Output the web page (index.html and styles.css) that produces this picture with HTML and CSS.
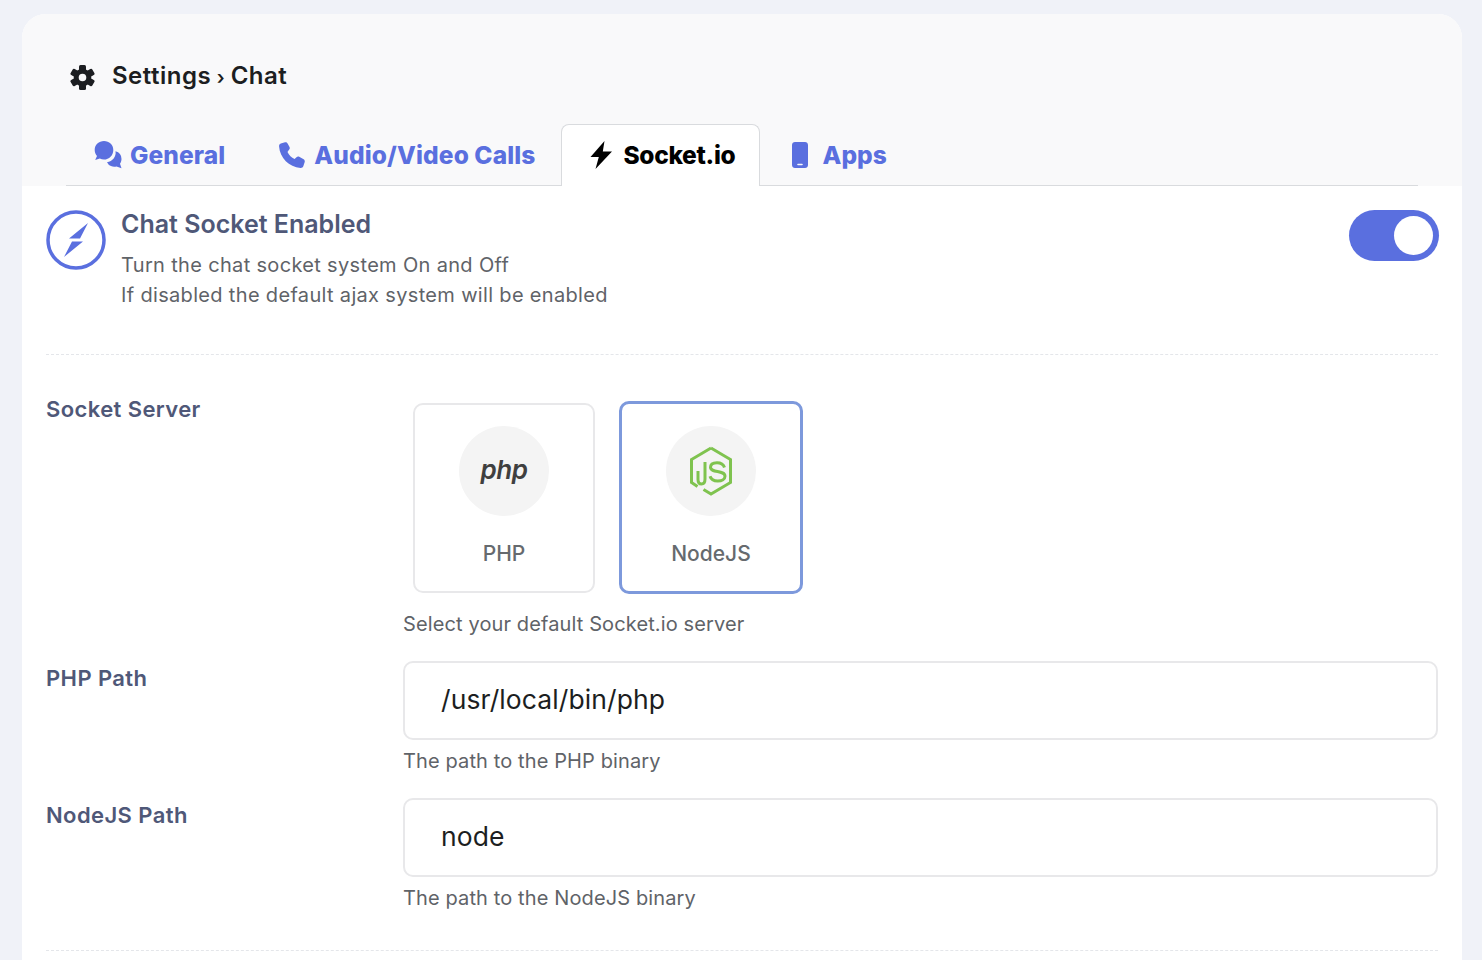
FILE: index.html
```html
<!DOCTYPE html>
<html lang="en">
<head>
    <meta charset="UTF-8">
    <meta name="viewport" content="width=device-width, initial-scale=1.0">
    <title>Settings - Chat</title>
    <link rel="stylesheet" href="styles.css">
</head>
<body>
    <div class="card">
        <div class="card-top">
            <h1 class="page-title">
                <svg class="gear" viewBox="-12.500 -12.500 25 25">
                    <circle r="6.300" fill="none" stroke="#1c1e21" stroke-width="5"/>
                    <rect x="-3.500" y="-12.500" width="7" height="6" rx="1.500"/>
                    <rect x="-3.500" y="-12.500" width="7" height="6" rx="1.500" transform="rotate(60)"/>
                    <rect x="-3.500" y="-12.500" width="7" height="6" rx="1.500" transform="rotate(120)"/>
                    <rect x="-3.500" y="-12.500" width="7" height="6" rx="1.500" transform="rotate(180)"/>
                    <rect x="-3.500" y="-12.500" width="7" height="6" rx="1.500" transform="rotate(240)"/>
                    <rect x="-3.500" y="-12.500" width="7" height="6" rx="1.500" transform="rotate(300)"/>
                </svg>
                <span>Settings <span class="crumb-sep">›</span> Chat</span>
            </h1>
            <div class="tabs">
                <a class="tab tab-first">
                    <svg class="tab-icon" viewBox="0 0 28 28">
                        <path d="M10 0C4.900 0 .7 3.800.7 8.900c0 2.300.9 4.400 2.300 6L1.200 19l4.600-1.400c1.300.6 2.700.9 4.200.9 5.100 0 9.300-4.100 9.300-9.600C19.300 3.800 15.100 0 10 0z"/>
                        <path d="M21.500 10.300A8 8 0 0 1 27.500 18c0 1.800-.6 3.500-1.500 4.800l1.500 4.500-5-1.800a8 8 0 0 1-9.500-4.300c5.500-.7 9.500-5.700 8.500-10.900z"/>
                    </svg>
                    General
                </a>
                <a class="tab">
                    <svg class="tab-icon" viewBox="0 0 26 26"><path d="M6.500 1.200 2.600 2.400C1.500 2.800.9 3.900 1 5c.8 10.600 9.200 19.100 19.900 20 1.200.1 2.200-.5 2.600-1.600l1.300-4c.3-1-.1-2-1-2.500l-4.100-2.200c-.8-.4-1.800-.3-2.500.3l-1.800 1.800c-2.900-1.500-5.100-3.800-6.600-6.700L10.400 8c.6-.7.7-1.700.3-2.500L8.900 2.300c-.5-.9-1.400-1.300-2.400-1.100z"/></svg>
                    Audio/Video Calls
                </a>
                <a class="tab tab-active">
                    <svg class="tab-icon" viewBox="0 0 24 28"><path d="M15.500 0 1.500 16h8.300L6.500 28 23 10.500h-9.200z"/></svg>
                    Socket.io
                </a>
                <a class="tab">
                    <svg class="tab-icon" viewBox="0 0 24 28"><path fill-rule="evenodd" d="M7 1h10c1.700 0 3 1.300 3 3v20c0 1.700-1.300 3-3 3H7c-1.700 0-3-1.300-3-3V4c0-1.700 1.300-3 3-3zm3 21.700a.8.800 0 0 0 0 1.600h4a.8.800 0 0 0 0-1.600z"/></svg>
                    Apps
                </a>
            </div>
        </div>

        <div class="card-body">
            <div class="switch-row">
                <svg class="bolt-circle" viewBox="0 0 60 60">
                    <circle cx="30" cy="30" r="28" fill="none" stroke="#5a6fdf" stroke-width="3.500"/>
                    <path d="M42 13 23 28.500H34zM37 31.500H26L18 47z" fill="#5a6fdf"/>
                </svg>
                <div class="switch-text">
                    <h2 class="switch-title">Chat Socket Enabled</h2>
                    <p class="switch-desc">Turn the chat socket system On and Off<br>If disabled the default ajax system will be enabled</p>
                </div>
                <div class="toggle"><span class="knob"></span></div>
            </div>

            <div class="form-rows">
                <div class="form-row">
                    <label class="form-label form-label-top">Socket Server</label>
                    <div>
                        <div class="servers">
                            <div class="server">
                                <div class="server-logo"><span class="php-logo">php</span></div>
                                <span class="server-name">PHP</span>
                            </div>
                            <div class="server server-active">
                                <div class="server-logo">
                                    <svg class="node-logo" viewBox="0 0 46 50" fill="none" stroke="#7fc34f" stroke-width="3">
                                        <path d="M23 2 42.500 13.500V36.500L23 48 15.500 43.500"/>
                                        <path d="M9.500 40.500 3.500 36.500V13.500L23 2"/>
                                        <path d="M17 16V33c0 3.200-1.500 5-3.500 5S10 36.500 10 33.500V25"/>
                                        <path d="M36.500 21.500c-1-3-3.500-4.800-7.500-4.800-4 0-6.500 1.800-6.500 4.600 0 6 14.500 2.500 14.500 9 0 2.800-3 4.700-7.200 4.700-4 0-6.800-1.500-7.800-4.700"/>
                                    </svg>
                                </div>
                                <span class="server-name">NodeJS</span>
                            </div>
                        </div>
                        <p class="help servers-help">Select your default Socket.io server</p>
                    </div>
                </div>

                <div class="form-row">
                    <label class="form-label">PHP Path</label>
                    <div>
                        <input class="text-input" type="text" value="/usr/local/bin/php">
                        <p class="help">The path to the PHP binary</p>
                    </div>
                </div>

                <div class="form-row">
                    <label class="form-label">NodeJS Path</label>
                    <div>
                        <input class="text-input" type="text" value="node">
                        <p class="help">The path to the NodeJS binary</p>
                    </div>
                </div>
            </div>
        </div>
    </div>
</body>
</html>
```

FILE: styles.css
```css
*{
    padding: 0;
    margin: 0;
    box-sizing: border-box;
}
html, body{
    height: 960px;
    overflow: hidden;
}
body{
    background-color: #f0f2f8;
    font-family: "Inter", "Noto Sans", Arial, sans-serif;
    padding: 14px 20px 0 22px;
}

.card{
    background: white;
    border-radius: 24px 24px 0 0;
    height: 946px;
}

.card-top{
    background: #f9f9fa;
    border-radius: 24px 24px 0 0;
    height: 172px;
    display: flex;
    flex-direction: column;
    justify-content: space-between;
    padding: 0 44px;
}

.page-title{
    display: flex;
    align-items: center;
    gap: 17px;
    font-size: 24px;
    font-weight: 600;
    color: #1c1e21;
    letter-spacing: 0.5px;
    word-spacing: -1px;
    padding: 49px 0 0 4px;
    line-height: 26px;
}

.crumb-sep{
    font-size: 19px;
}

.gear{
    width: 25px;
    height: 25px;
    fill: #1c1e21;
}

.tabs{
    display: flex;
    height: 62px;
    border-bottom: 1px solid #d9dbde;
    padding-left: 2px;
}

.tab{
    display: flex;
    align-items: center;
    gap: 8px;
    padding: 0 25px 2px;
    font-size: 24.5px;
    font-weight: 800;
    letter-spacing: 0.1px;
    color: #5a6fdf;
    margin-bottom: -1px;
    border: 1px solid transparent;
    border-bottom: none;
    white-space: nowrap;
}

.tab-first{
    padding-right: 26px;
}

.tab-icon{
    width: 28px;
    height: 28px;
    fill: #5a6fdf;
}

.tab-active{
    background: white;
    color: #000;
    border-color: #d9dbde;
    border-radius: 8px 8px 0 0;
    letter-spacing: -0.3px;
    padding-right: 24px;
}

.tab-active .tab-icon{
    fill: #000;
}

.card-body{
    padding: 24px 24px 0;
}

.switch-row{
    display: flex;
    align-items: flex-start;
    gap: 15px;
    height: 145px;
    border-bottom: 1px dashed #e4e6ea;
}

.bolt-circle{
    width: 60px;
    height: 60px;
    flex-shrink: 0;
}

.switch-text{
    flex: 1;
}

.switch-title{
    font-size: 25px;
    font-weight: 600;
    color: #4f5878;
    line-height: 28px;
}

.switch-desc{
    font-size: 20px;
    color: #5f6368;
    line-height: 30px;
    margin-top: 12px;
    letter-spacing: 0.33px;
}

.toggle{
    width: 90px;
    height: 51px;
    background: #5a6fdf;
    border-radius: 26px;
    display: flex;
    align-items: center;
    justify-content: flex-end;
    padding-right: 6px;
    margin-right: -1px;
}

.knob{
    width: 39px;
    height: 39px;
    border-radius: 50%;
    background: white;
}

.form-rows{
    display: flex;
    flex-direction: column;
    gap: 24px;
    padding: 46px 0 39px;
    border-bottom: 1px dashed #e4e6ea;
}

.form-row{
    display: grid;
    grid-template-columns: 357px 1fr;
}

.form-label{
    font-size: 22px;
    font-weight: 600;
    color: #4f5878;
    line-height: 26px;
    letter-spacing: 0.4px;
    padding-top: 4px;
}

.form-label-top{
    padding-top: 0;
    margin-top: -5px;
}

.servers{
    display: flex;
    align-items: center;
    gap: 24px;
    padding-left: 10px;
}

.server{
    width: 182px;
    height: 190px;
    background: white;
    border: 2px solid #e8e8ea;
    border-radius: 10px;
    display: flex;
    flex-direction: column;
    align-items: center;
    padding-top: 21px;
}

.server-active{
    width: 184px;
    height: 193px;
    border: 3px solid #7d99dc;
    padding-top: 22px;
}

.server-logo{
    width: 90px;
    height: 90px;
    border-radius: 50%;
    background: #f4f4f4;
    display: flex;
    align-items: center;
    justify-content: center;
}

.php-logo{
    font-size: 26px;
    font-weight: 600;
    font-style: italic;
    color: #3f3f3f;
    letter-spacing: -0.5px;
    margin-bottom: 3px;
}

.node-logo{
    width: 46px;
    height: 50px;
}

.server-name{
    font-size: 21px;
    font-weight: 500;
    color: #666a6e;
    margin-top: 25px;
}

.help{
    font-size: 20px;
    color: #5f6368;
    line-height: 26px;
    margin-top: 8px;
    letter-spacing: 0.12px;
}

.servers-help{
    margin-top: 17px;
}

.text-input{
    display: block;
    width: 100%;
    height: 79px;
    border: 2px solid #e8e8ea;
    border-radius: 10px;
    padding: 0 36px 4px;
    font-family: inherit;
    font-size: 26.5px;
    letter-spacing: 0.1px;
    color: #1c1e21;
    background: white;
    outline: none;
}
```
